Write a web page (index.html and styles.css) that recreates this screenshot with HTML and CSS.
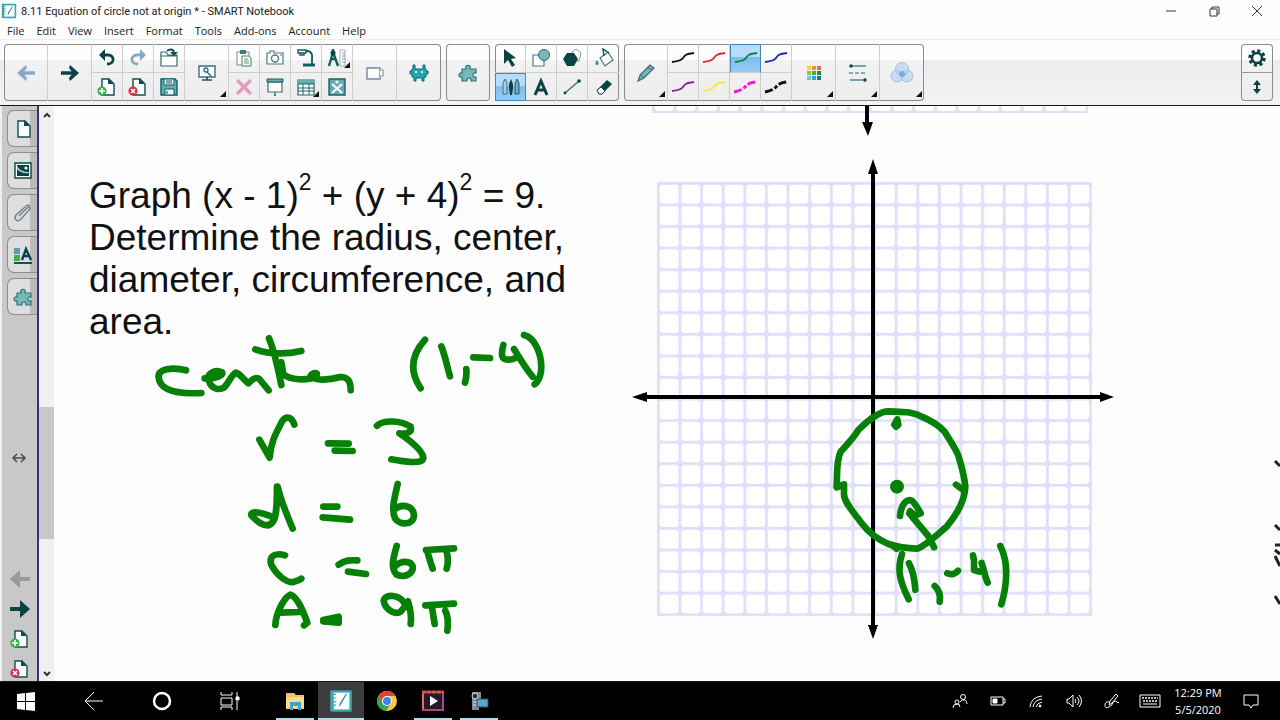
FILE: index.html
```html
<!DOCTYPE html>
<html lang="en">
<head>
<meta charset="utf-8">
<meta name="viewport" content="width=device-width, initial-scale=1">
<title>8.11 Equation of circle not at origin * - SMART Notebook</title>
<link rel="stylesheet" href="styles.css">
</head>
<body>
<svg class="defs" aria-hidden="true">
  <symbol id="page" viewBox="0 0 20 20"><path d="M5 2h7l5 5v11H5z" fill="#fff" stroke="#0d4f55" stroke-width="1.4"/><path d="M11 1l6 6h-6z" fill="#0d4f55"/></symbol>
  <symbol id="page-add" viewBox="0 0 20 20"><use href="#page"/><circle cx="5" cy="14" r="4.6" fill="#35b04c"/><path d="M5 11v6M2 14h6" stroke="#fff" stroke-width="1.6"/></symbol>
  <symbol id="page-del" viewBox="0 0 20 20"><use href="#page"/><circle cx="5" cy="14" r="4.6" fill="#cf3345"/><path d="M3 12l4 4M7 12l-4 4" stroke="#fff" stroke-width="1.6"/></symbol>
  <symbol id="puzzle" viewBox="0 0 20 20"><path d="M4 6h4c-2-5 6-5 4 0h6v4c-4-1-4 5 0 4v4h-5c1-4-5-4-4 0H4v-4c-4 1-4-5 0-4z" fill="#74b9b8" stroke="#2d7377" stroke-width="1.2"/></symbol>
  <symbol id="arrow" viewBox="0 0 20 20"><path d="M1 10h14" stroke="currentColor" stroke-width="3.5"/><path d="M10 2l9 8-9 8-1-3 4-5-4-5z" fill="currentColor"/></symbol>
  <symbol id="solid-arrow" viewBox="0 0 20 20"><path d="M0 8h10V1l10 9-10 9v-7H0z" fill="currentColor"/></symbol>
  <symbol id="curve" viewBox="0 0 26 20"><path d="M2 14C8 13 11 13 13 10S16 6 24 5" fill="none" stroke="currentColor" stroke-width="1.8"/></symbol>
  <symbol id="curve-dash" viewBox="0 0 26 20"><path d="M2 15C8 14 11 12 13 10S16 6 24 5" fill="none" stroke="currentColor" stroke-width="3" stroke-dasharray="8 2 4 2"/></symbol>
  <symbol id="logo" viewBox="0 0 20 20"><rect x="1" y="1" width="18" height="18" rx="1" fill="#3fa3b8"/><path d="M4 3h13v14H4z" fill="#fff"/><path d="M5 4v12" stroke="#4b9aaa" stroke-width="2" stroke-dasharray="1 2"/><path d="M15 4l-5 9-2 2 1-3 5-8z" fill="#2c8399"/></symbol>
</svg>
<div class="app">
  <header class="titlebar">
    <svg class="i16" aria-hidden="true"><use href="#logo"/></svg>
    <h1>8.11 Equation of circle not at origin * - SMART Notebook</h1>
    <div class="window-buttons">
      <button aria-label="Minimize"><svg class="i12" viewBox="0 0 12 12"><path d="M1 6h10"/></svg></button>
      <button aria-label="Restore"><svg class="i12" viewBox="0 0 12 12"><path d="M2 4h7v7H2zM4 4V2h7v7H9"/></svg></button>
      <button aria-label="Close"><svg class="i12" viewBox="0 0 12 12"><path d="M1 1l10 10M11 1L1 11"/></svg></button>
    </div>
  </header>
  <nav class="menubar" aria-label="Main menu">
    <button>File</button><button>Edit</button><button>View</button><button>Insert</button><button>Format</button><button>Tools</button><button>Add-ons</button><button>Account</button><button>Help</button>
  </nav>

  <div class="toolbar" role="toolbar" aria-label="Tools">
    <div class="group">
      <button class="big faded" aria-label="Previous page"><svg class="i20 flip"><use href="#arrow"/></svg></button>
      <button class="big" aria-label="Next page"><svg class="i20"><use href="#arrow"/></svg></button>
      <div class="pairs">
        <button aria-label="Undo"><svg class="i20" viewBox="0 0 20 20"><path d="M4 7h7c7 0 7 9-1 9" fill="none" stroke="#0a4246" stroke-width="2.8"/><path d="M8 1L2 7l6 6z" fill="#0a4246"/></svg></button>
        <button aria-label="Add page"><svg class="i20"><use href="#page-add"/></svg></button>
        <button aria-label="Redo"><svg class="i20" viewBox="0 0 20 20"><path d="M16 7H9c-7 0-7 9 1 9" fill="none" stroke="#88a9c3" stroke-width="2.8"/><path d="M12 1l6 6-6 6z" fill="#88a9c3"/></svg></button>
        <button aria-label="Delete page"><svg class="i20"><use href="#page-del"/></svg></button>
        <button aria-label="Open"><svg class="i20" viewBox="0 0 20 20"><path d="M2 18V4h5l2 3h9v11zM2 8h16" fill="#fff" stroke="#2c6f74" stroke-width="1.2"/><path d="M8 3c4-3 7-1 7 2" fill="none" stroke="#0d4f55" stroke-width="2"/><path d="M11 4h8l-4 4z" fill="#0d4f55"/></svg></button>
        <button aria-label="Save"><svg class="i20" viewBox="0 0 20 20"><path d="M2 2h14l2 2v14H2z" fill="#62adae" stroke="#145b62" stroke-width="1.4"/><path d="M5 2h10v6H5zM6 12h9v6H6z" fill="#e9f4f4" stroke="#145b62"/><path d="M7 4h6M7 6h6M8 14v3" stroke="#145b62"/></svg></button>
      </div>
      <button class="big more" aria-label="View screens"><svg class="i20" viewBox="0 0 20 20"><path d="M2 3h16v11H2z" fill="#fff" stroke="#426c80" stroke-width="1.4"/><path d="M5 17h10M10 14v3" stroke="#145b62" stroke-width="1.6"/><circle cx="9" cy="7" r="2" fill="none" stroke="#28719b" stroke-width="1.4"/><path d="M10 9l4 4" stroke="#28719b" stroke-width="1.6"/></svg></button>
      <div class="pairs">
        <button aria-label="Paste"><svg class="i20" viewBox="0 0 20 20"><path d="M3 4h12v13H3z" fill="#fff" stroke="#668e9e"/><path d="M6 2h6v4H6z" fill="#397d83"/><path d="M8 8h7l2 2v8H8z" fill="#fff" stroke="#49815a"/><path d="M10 11h4M10 13h5M10 15h5" stroke="#5d9e63"/></svg></button>
        <button aria-label="Delete"><svg class="i20" viewBox="0 0 20 20"><path d="M3 3l14 14M17 3L3 17" stroke="#dda0bd" stroke-width="3.4"/></svg></button>
        <button aria-label="Capture"><svg class="i20" viewBox="0 0 20 20"><path d="M2 5h3V3h4v2h9v11H2z" fill="#fff" stroke="#4f7b83" stroke-width="1.2"/><circle cx="10" cy="10.5" r="3.5" fill="none" stroke="#4f7b83" stroke-width="1.4"/><path d="M15 7h2" stroke="#4f7b83"/></svg></button>
        <button aria-label="Screen shade"><svg class="i20" viewBox="0 0 20 20"><path d="M3 5h14v10H3z" fill="#fff" stroke="#426c76" stroke-width="1.2"/><path d="M2 2h16v3H2z" fill="#6aacb0" stroke="#145b62"/><path d="M10 15v2" stroke="#145b62"/><circle cx="10" cy="18" r="1" fill="#145b62"/></svg></button>
        <button aria-label="Document camera"><svg class="i20" viewBox="0 0 20 20"><path d="M9 3h3q5 1 4 8v6" fill="none" stroke="#145b62" stroke-width="1.8"/><path d="M2 2h8v3H2zM4 5h4v2H4z" fill="#fff" stroke="#145b62" stroke-width="1.4"/><path d="M7 17h12" stroke="#145b62" stroke-width="3"/></svg></button>
        <button aria-label="Table" class="more"><svg class="i20" viewBox="0 0 20 20"><path d="M2 3h16v15H2z" fill="#fff" stroke="#23666c" stroke-width="1.2"/><path d="M2 3h16v4H2z" fill="#67abae"/><path d="M2 7h16M2 11h16M2 14h16M7 7v11M13 7v11" stroke="#23666c"/></svg></button>
        <button aria-label="Measurement tools" class="more"><svg class="i20" viewBox="0 0 20 20"><path d="M6 1v3M6 4L2 18M6 4l5 14M4 11h5" fill="none" stroke="#145b62" stroke-width="2.4"/><circle cx="6" cy="5" r="2.5" fill="#0a4246"/><path d="M13 2h5v16h-5z" fill="#fff" stroke="#a0aeb5"/><path d="M15 5h3M15 8h3M15 11h3M15 14h3" stroke="#83959f"/></svg></button>
        <button aria-label="Activity builder"><svg class="i20" viewBox="0 0 20 20"><path d="M2 2h16v16H2z" fill="#66aab0" stroke="#1b6269" stroke-width="1.4"/><path d="M5 7l10 9M15 7L5 16" stroke="#fff" stroke-width="2.2"/><circle cx="10" cy="5" r="1.6" fill="#fff"/></svg></button>
      </div>
      <button class="big" aria-label="Response"><svg class="i20" viewBox="0 0 20 20"><path d="M2 5h13v11H2z" fill="#fff" stroke="#7187ad" stroke-width="1.4"/><path d="M15 7h3v6h-3" fill="#fff" stroke="#7c9d98" stroke-width="1.2"/></svg></button>
      <button class="big" aria-label="Lab activities"><svg class="i20" viewBox="0 0 20 20"><path d="M4 2h2v4h8V2h2v4h1v2h2v3h-2v3h-2v4h-2v-3H7v3H5v-4H3v-3H1V8h2V6h1z" fill="#22a7b3" stroke="#116575"/><path d="M6 8h2v2H6zM12 8h2v2h-2z" fill="#dff"/></svg></button>
    </div>
    <div class="group">
      <button class="big" aria-label="Add-ons"><svg class="i20"><use href="#puzzle"/></svg></button>
    </div>
    <div class="group">
      <div class="pairs">
        <button aria-label="Select"><svg class="i20" viewBox="0 0 20 20"><path d="M4 1l12 9-5 1 4 6-3 2-4-7-4 4z" fill="#0a4246"/></svg></button>
        <button aria-label="Pens" class="on" aria-pressed="true"><svg class="i20" viewBox="0 0 20 20"><path d="M2 6l2-4 2 4v11H2z" fill="#a5d0dc" stroke="#317486"/><path d="M8 7l2-5 2 5v4l-1 7H9l-1-7z" fill="#0a4246"/><path d="M14 6l2-4 2 4v11h-4z" fill="#6eacbc" stroke="#235f70"/></svg></button>
        <button aria-label="Shapes"><svg class="i20" viewBox="0 0 20 20"><path d="M2 7h11v11H2z" fill="#fff" stroke="#477e8a" stroke-width="1.2"/><circle cx="13" cy="7" r="5.5" fill="#79b7ba" stroke="#286d74"/></svg></button>
        <button aria-label="Text"><svg class="i20" viewBox="0 0 20 20"><path d="M4 18L10 4l6 14M6 13h8" fill="none" stroke="#0a4246" stroke-width="3"/></svg></button>
        <button aria-label="Regular polygons"><svg class="i20" viewBox="0 0 20 20"><path d="M10 4l4-3 5 4-2 8h-5z" fill="#fff" stroke="#82999d"/><path d="M5 5h7l4 6-4 7H5l-4-7z" fill="#0a4246"/></svg></button>
        <button aria-label="Line"><svg class="i20" viewBox="0 0 20 20"><path d="M3 16L17 4" stroke="#346d73" stroke-width="1.2"/><circle cx="3" cy="16" r="1.4" fill="#0a4246"/><circle cx="17" cy="4" r="1.8" fill="#0a4246"/></svg></button>
        <button aria-label="Fill"><svg class="i20" viewBox="0 0 20 20"><path d="M6 10l8-6 5 8-8 6z" fill="#fff" stroke="#3e747b" stroke-width="1.2"/><path d="M10 8L9 1l6 4" fill="none" stroke="#0d4f55" stroke-width="1.4"/><path d="M3 12c3 4 1 5 0 5s-3-1 0-5" fill="#3d8ba2"/></svg></button>
        <button aria-label="Eraser"><svg class="i20" viewBox="0 0 20 20"><path d="M3 13L13 3l5 4L8 17H5z" fill="#0a4246"/><path d="M3 13l4-3 4 4-3 3H5z" fill="#fff" stroke="#0a4246"/></svg></button>
      </div>
    </div>
    <div class="group">
      <button class="big more" aria-label="Pen type"><svg class="i20" viewBox="0 0 20 20"><path d="M4 12L14 2l4 3L8 15l-6 3z" fill="#79b3ba" stroke="#366c78" stroke-width="1.2"/><path d="M12 4l4 3M4 12l4 3" stroke="#366c78"/></svg></button>
      <div class="pairs">
        <button aria-label="Black pen" class="c-black"><svg class="pen"><use href="#curve"/></svg></button>
        <button aria-label="Purple pen" class="c-purple"><svg class="pen"><use href="#curve"/></svg></button>
        <button aria-label="Red pen" class="c-red"><svg class="pen"><use href="#curve"/></svg></button>
        <button aria-label="Yellow pen" class="c-yellow"><svg class="pen"><use href="#curve"/></svg></button>
        <button aria-label="Green pen" class="c-green on" aria-pressed="true"><svg class="pen"><use href="#curve"/></svg></button>
        <button aria-label="Magenta dashed pen" class="c-magenta"><svg class="pen"><use href="#curve-dash"/></svg></button>
        <button aria-label="Blue pen" class="c-blue"><svg class="pen"><use href="#curve"/></svg></button>
        <button aria-label="Black dashed pen" class="c-black"><svg class="pen"><use href="#curve-dash"/></svg></button>
      </div>
      <button class="big more" aria-label="Color"><svg class="i20" viewBox="0 0 20 20"><path d="M3 3h4v4H3z" fill="#f3d433"/><path d="M8 3h4v4H8z" fill="#ee8c3a"/><path d="M13 3h4v4h-4z" fill="#e66b55"/><path d="M3 8h4v4H3z" fill="#9aba42"/><path d="M8 8h4v4H8z" fill="#52a83a"/><path d="M13 8h4v4h-4z" fill="#169537"/><path d="M3 13h4v4H3z" fill="#72c6d9"/><path d="M8 13h4v4H8z" fill="#3aa0c8"/><path d="M13 13h4v4h-4z" fill="#1472a0"/></svg></button>
      <button class="big more" aria-label="Line style"><svg class="i20" viewBox="0 0 20 20"><path d="M2 3h16M2 17h16" stroke="#5a8799" stroke-width="1.5"/><path d="M1 10h18" stroke="#6a8cab" stroke-width="1.4" stroke-dasharray="4 2"/><circle cx="3" cy="3" r="1.7" fill="#0a4246"/><circle cx="17" cy="17" r="1.7" fill="#0a4246"/></svg></button>
      <button class="big more" aria-label="Transparency"><svg class="i24" viewBox="0 0 24 24"><g fill="#b9d2f2" fill-opacity=".7" stroke="#a3bfe3"><circle cx="7" cy="15" r="6"/><circle cx="17" cy="15" r="6"/><circle cx="12" cy="8" r="6.5"/></g><circle cx="12" cy="13" r="3" fill="#7fa9da"/></svg></button>
    </div>
    <div class="group settings">
      <button aria-label="Customize toolbar"><svg class="i20" viewBox="0 0 20 20"><circle cx="10" cy="10" r="7" fill="none" stroke="#0a4246" stroke-width="3.5" stroke-dasharray="3 2.5"/><circle cx="10" cy="10" r="5" fill="none" stroke="#0a4246" stroke-width="2.6"/></svg></button>
      <button aria-label="Move toolbar"><svg class="i20" viewBox="0 0 20 20"><path d="M10 5v10" stroke="#0a4246" stroke-width="2"/><path d="M6 8l4-5 4 5zM6 12l4 5 4-5z" fill="#0a4246"/></svg></button>
    </div>
  </div>

  <main class="workspace">
    <aside class="sidebar">
      <div class="tabs">
        <button aria-label="Page sorter"><svg class="i20"><use href="#page"/></svg></button>
        <button aria-label="Gallery"><svg class="i20" viewBox="0 0 20 20"><path d="M2 2h16v15H2z" fill="#fff" stroke="#0a4246" stroke-width="1.4"/><path d="M4 4h12v11H4z" fill="#0a4246"/><path d="M4 5q3 6 12 6v1Q8 13 4 8z" fill="#b6d5d8"/><circle cx="13" cy="7" r="1.6" fill="#fff"/></svg></button>
        <button aria-label="Attachments"><svg class="i20" viewBox="0 0 20 20"><path d="M6 13l8-8q3-2 3 1L8 16q-3 3-5 1t0-5L12 4q3-3 5-1" fill="none" stroke="#72858f" stroke-width="1.5"/></svg></button>
        <button aria-label="Properties"><svg class="i20" viewBox="0 0 20 20"><path d="M1 3h6v6H1z" fill="#6297b5"/><path d="M1 10h6v6H1z" fill="#45b04b"/><path d="M9 15l4-11 5 11M11 11h5" fill="none" stroke="#0a4246" stroke-width="2.4"/><path d="M1 18h18" stroke="#0a4246" stroke-width="1.8"/></svg></button>
        <button aria-label="Add-ons"><svg class="i20"><use href="#puzzle"/></svg></button>
      </div>
      <button class="handle" aria-label="Resize sidebar"><svg class="i16" viewBox="0 0 16 16"><path d="M3 8h10M6 4L2 8l4 4M10 4l4 4-4 4" fill="none" stroke="#4b4b4b" stroke-width="1.6"/></svg></button>
      <div class="pager">
        <button class="disabled" aria-label="Previous page"><svg class="i20 flip"><use href="#solid-arrow"/></svg></button>
        <button aria-label="Next page"><svg class="i20"><use href="#solid-arrow"/></svg></button>
        <button aria-label="Add page"><svg class="i20"><use href="#page-add"/></svg></button>
        <button aria-label="Delete page"><svg class="i20"><use href="#page-del"/></svg></button>
      </div>
    </aside>
    <div class="scrollbar">
      <button aria-label="Scroll up"><svg class="i12" viewBox="0 0 12 12"><path d="M3 8l3-3 3 3"/></svg></button>
      <div class="track"><div class="thumb"></div></div>
      <button aria-label="Scroll down"><svg class="i12" viewBox="0 0 12 12"><path d="M3 5l3 3 3-3"/></svg></button>
    </div>
    <section class="canvas">
      <p class="question">Graph (x - 1)<sup>2</sup> + (y + 4)<sup>2</sup> = 9.<br>Determine the radius, center,<br>diameter, circumference, and<br>area.</p>
      <svg class="drawing" viewBox="54 106 1226 575" preserveAspectRatio="xMinYMin meet" role="img" aria-label="Coordinate grid with a circle centered at (1,-4); notes: center (1,-4), r = 3, d = 6, C = 6π, A = 9π">
        <defs>
          <pattern id="cells" width="20" height="20" patternUnits="userSpaceOnUse"><rect width="20" height="20" fill="#dfdffb"/><rect x="2.5" y="2.5" width="17.5" height="17.5" rx="3" fill="#fff"/></pattern>
        </defs>
        <svg x="657" y="182" width="435" height="434" viewBox="0 0 402.5 402.5" preserveAspectRatio="none"><rect width="403" height="403" fill="url(#cells)"/></svg>
        <svg x="652" y="106" width="436" height="7" viewBox="0 395 402 7" preserveAspectRatio="none"><rect width="402" height="402" fill="url(#cells)"/></svg>
        <path d="M867 106v20M873 168v462M642 397h463" stroke="#000" stroke-width="4"/>
        <path d="M862 122h11l-5 14zM868 174h10l-5-15zM868 625h10l-5 14zM647 392v10l-15-5zM1100 392v10l14-5z"/>
        <g class="ink" transform="translate(140 325) scale(.33333)">
          <path d="M138 136C100 126 52 130 56 158C60 195 110 208 184 204"/>
          <path d="M194 160C225 162 252 152 246 142C225 132 198 145 207 168C215 195 240 195 252 188C268 170 275 150 287 143C300 145 312 165 325 175C340 160 350 155 358 162L386 196"/>
          <path d="M387 40C400 70 410 110 424 180M346 73C380 85 430 90 484 78M424 112L430 148C450 165 500 168 525 156C540 143 522 140 512 152C520 166 560 168 600 156C625 155 632 170 632 196"/>
          <path d="M855 44C818 85 805 135 842 190M904 64C915 90 920 120 930 154M979 132C980 145 979 160 975 173M1000 97L1050 99M1090 60C1082 90 1085 104 1104 104C1125 104 1130 98 1132 90M1122 72C1145 110 1160 135 1178 155M1152 30C1185 38 1208 90 1203 140Q1198 168 1184 178"/>
          <path d="M358 344L389 398C392 350 410 320 427 288C438 272 455 275 463 299M564 355L626 356M584 377L638 378M711 302C730 285 780 285 812 305C818 325 795 327 778 325C800 340 850 375 850 400C848 418 790 410 754 403"/>
        </g>
        <g class="ink" transform="translate(230 470) scale(.33333)">
          <path d="M141 50C140 90 142 140 128 156C115 175 90 165 64 136C62 122 90 125 130 142M143 50C155 100 175 145 188 176M280 110H322M278 142L360 149"/>
          <path d="M503 42C492 90 484 120 495 145C510 168 552 165 552 135C548 105 515 100 494 118"/>
          <path d="M165 256C140 248 115 255 124 285C140 315 170 340 190 336C200 333 210 330 214 326M326 284C345 270 360 270 382 271M354 305L408 312"/>
          <path d="M500 228C488 270 482 295 500 314C525 325 552 310 548 288C540 270 510 272 494 290M588 240L672 235M592 244C598 265 602 280 608 296M650 245C655 265 655 280 650 296"/>
          <path d="M136 465C138 430 160 385 181 374C205 380 225 440 232 458L222 466M150 428L212 426M280 450L326 440V458L280 454"/>
          <path d="M526 404C510 372 465 370 461 393C468 425 500 434 512 425C525 410 530 400 534 394C542 420 545 440 542 462M586 406L672 401M606 412L614 462M646 422C655 440 655 460 652 482"/>
        </g>
        <g class="ink" transform="translate(820 390) scale(.33333)">
          <path d="M50 290C52 250 48 215 62 185C80 165 100 145 115 120C145 90 180 64 205 64C240 66 275 62 310 82C340 95 360 110 374 125C395 160 410 180 416 200C428 240 434 265 436 290C434 340 405 380 380 410C350 435 320 465 292 476C260 475 230 470 205 462C165 445 140 420 125 400C100 365 70 335 72 310V283L50 292"/>
          <path d="M232 88L223 104L228 110L235 104ZM408 284L430 300M218 466L230 476M268 370L325 438L342 472M240 378C242 350 258 320 278 334Q292 350 302 370L285 376L270 364"/>
          <circle cx="231" cy="290" r="13"/>
          <path d="M246 492C230 540 240 575 266 628M267 520C280 545 284 570 286 599M344 588Q364 606 359 635M382 550C395 556 408 550 414 542M459 496C465 515 462 530 462 540L478 545M485 519C492 540 495 560 503 578M541 468C568 520 560 590 544 643"/>
        </g>
        <path d="M1275 461l5 5M1275 525l5 5M1275 545h5M1275 550l5 4M1275 556l5 10M1275 596l5 8" fill="none" stroke="#222" stroke-width="3"/>
      </svg>
    </section>
  </main>

  <footer class="taskbar">
    <button class="start" aria-label="Start"><svg class="i20" viewBox="0 0 20 20"><path d="M1 3l8-1v8H1zM10 2l9-1v9h-9zM1 11h8v8l-8-1zM10 11h9v9l-9-1z" fill="#fff"/></svg></button>
    <div class="system">
      <button aria-label="Back"><svg class="i20 line" viewBox="0 0 20 20"><path d="M19 10H1M10 1l-9 9 9 9"/></svg></button>
      <button aria-label="Cortana"><svg class="i20 line" viewBox="0 0 20 20"><circle cx="10" cy="10" r="8" stroke-width="2.5"/></svg></button>
      <button aria-label="Task view"><svg class="i20 line" viewBox="0 0 20 20"><path d="M1 1v3h11V1M1 7h11v7H1zM1 19v-3h11v3M17 1v5M17 10v9"/><path d="M16 6h3v3h-3z" fill="#fff"/></svg></button>
    </div>
    <div class="apps">
      <button class="open" aria-label="File Explorer"><svg class="i20" viewBox="0 0 20 20"><path d="M1 2h8l2 2h8v14H1z" fill="#efc262"/><path d="M1 6h18v11H1z" fill="#fbdc84"/><path d="M5 11h11v8h-3v-4H8v4H5z" fill="#3ea4d6"/></svg></button>
      <button class="open active" aria-label="SMART Notebook"><svg class="i24"><use href="#logo"/></svg></button>
      <button aria-label="Chrome"><svg class="i20" viewBox="0 0 20 20"><circle cx="10" cy="10" r="10" fill="#f7cc36"/><path d="M1.3 5A10 10 0 0 1 18.700 5H10a5 5 0 0 0-4 8z" fill="#df4535"/><path d="M1.3 5A10 10 0 0 0 9 20l5-7.500a5 5 0 0 1-8 0z" fill="#34a653"/><circle cx="10" cy="10" r="5" fill="#fff"/><circle cx="10" cy="10" r="4" fill="#4181ed"/></svg></button>
      <button class="open" aria-label="Movies"><svg class="i24" viewBox="0 0 24 24"><path d="M2 3h20v18H2z" fill="#211c28" stroke="#a44c87" stroke-width="2"/><path d="M1 3h22" stroke="#e64d45" stroke-width="3" stroke-dasharray="4 1"/><path d="M2 5v15" stroke="#ef7856" stroke-width="1.5"/><path d="M9 7l8 5-8 5z" fill="#fff"/></svg></button>
      <button class="open" aria-label="Camcorder"><svg class="i20" viewBox="0 0 20 20"><path d="M3 1h9v6l-2 5v7H3z" fill="#858b8d"/><circle cx="6" cy="5" r="3" fill="#333" stroke="#ddd"/><path d="M4 11h4M4 14h4" stroke="#ddd"/><path d="M8 8h11v8H8z" fill="#55a9d0" stroke="#394d56"/></svg></button>
    </div>
    <div class="tray">
      <button aria-label="People"><svg class="i16 line" viewBox="0 0 16 16"><circle cx="5" cy="9" r="2"/><circle cx="11" cy="4" r="2.5"/><path d="M1 15q0-4 4-4 3 0 3 3M8 9q2-3 5-2 2 1 2 4"/></svg></button>
      <button aria-label="Battery"><svg class="i16 line" viewBox="0 0 16 16"><path d="M1 4h12v8H1zM13 6h2v4h-2"/><path d="M3 6h4v4H3z" fill="#fff"/></svg></button>
      <button aria-label="Network"><svg class="i16 line" viewBox="0 0 16 16"><path d="M2 14Q3 4 14 3M5 14q1-7 9-8M8 14q1-4 6-5"/><circle cx="12" cy="13" r="1" fill="#fff"/></svg></button>
      <button aria-label="Volume"><svg class="i16 line" viewBox="0 0 16 16"><path d="M1 6h2l4-4v12l-4-4H1zM9 6q2 2 0 4M11 4q4 4 0 8M13 2q5 6 0 12"/></svg></button>
      <button aria-label="Pen workspace"><svg class="i16 line" viewBox="0 0 16 16"><path d="M5 12l1-4 6-7 2 2-6 7zM6 9q-5-1-5 3t4 2 4-5q3-2 4 0t2 0"/></svg></button>
      <button aria-label="Keyboard"><svg class="keyboard line" viewBox="0 0 22 14"><path d="M1 1h20v12H1zM4 10h14"/><path d="M3 4h16M4 7h15" stroke-width="1.5" stroke-dasharray="2 1"/></svg></button>
    </div>
    <div class="clock"><time datetime="12:29">12:29 PM</time><time datetime="2020-05-05">5/5/2020</time></div>
    <button class="notify" aria-label="Notifications"><svg class="i16 line" viewBox="0 0 16 16"><path d="M1 2h14v10h-5l-2 3-2-3H1z"/></svg></button>
  </footer>
</div>
</body>
</html>
```
FILE: styles.css
```css
* { box-sizing: border-box; }
body {
  margin: 0;
  background: #fdfdfd;
  color: #222;
  font-family: "Open Sans", "Noto Sans", sans-serif;
  font-size: 11px;
}
button {
  display: flex;
  align-items: center;
  justify-content: center;
  margin: 0;
  padding: 0;
  border: 0;
  background: none;
  color: inherit;
  font: inherit;
}
svg { flex: none; }
.defs { position: absolute; width: 0; height: 0; }
.i12 { width: 12px; height: 12px; fill: none; stroke: #333; }
.i16 { width: 16px; height: 16px; }
.i20 { width: 20px; height: 20px; }
.i24 { width: 24px; height: 24px; }
.flip { transform: rotate(180deg); }
.line { fill: none; stroke: #fff; }

.app { display: flex; flex-direction: column; min-height: 100vh; overflow: hidden; }

.titlebar { display: flex; align-items: center; gap: 4px; height: 22px; padding: 0 2px 0 1px; }
.titlebar h1 {
  flex: 1;
  margin: 0;
  font-family: Roboto, "Open Sans", sans-serif;
  font-size: 11px;
  font-weight: 400;
}
.window-buttons { display: flex; }
.window-buttons button { width: 43px; height: 22px; }

.menubar { display: flex; gap: 12px; height: 18px; padding-left: 7px; border-bottom: 1px solid #ececec; }

.toolbar {
  display: flex;
  gap: 5px;
  padding: 4px 7px 4px 4px;
  background: linear-gradient(#fdfdfd 20px, #ececee 20px, #f3f3f6);
}
.group {
  display: flex;
  height: 57px;
  border-radius: 4px;
  background: linear-gradient(#fdfdfd 16px, #f2f2f2 16px, #ededed);
  box-shadow: inset 0 0 0 1px #8b8b8b;
  color: #0a4246;
}
.group button { position: relative; border-right: 1px solid #cdcdcd; }
.group > :last-child, .group > .pairs:last-child button:nth-last-child(-n+2) { border-right: 0; }
.big { width: 44px; }
.group .faded { color: #88a9c3; }
.pairs {
  display: grid;
  grid-template-rows: 1fr 1fr;
  grid-auto-columns: 31px;
  grid-auto-flow: column;
}
.pairs button:nth-child(odd) { border-bottom: 1px solid #cdcdcd; }
.more::after {
  content: "";
  position: absolute;
  right: 2px;
  bottom: 4px;
  border: 3px solid #111;
  border-top-color: transparent;
  border-left-color: transparent;
}
.group .on { border: 1px solid #4787b8; background: linear-gradient(#b7dcfa 45%, #7dbdf0 45%, #94cbf5); }
.pen { width: 26px; height: 20px; }
.c-black { color: #111; }
.c-purple { color: #86208e; }
.c-red { color: #dc2631; }
.c-yellow { color: #f2ed24; }
.c-green { color: #108235; }
.c-magenta { color: #ee19dc; }
.c-blue { color: #1f22bd; }
.settings { flex-direction: column; width: 32px; margin-left: auto; }
.settings button { flex: 1; border-right: 0; }
.settings button:first-child { border-bottom: 1px solid #999; }

.workspace { display: flex; flex: 1; border-top: 1px solid #160b58; border-bottom: 1px solid #160b58; }
.sidebar {
  display: flex;
  flex-direction: column;
  justify-content: space-between;
  width: 39px;
  padding: 4px 0 0 5px;
  border-left: 2px solid #eee;
  border-right: 2px solid #3b2d80;
  background: #c8c8c8;
  color: #0a4246;
}
.tabs { display: flex; flex-direction: column; gap: 5px; }
.tabs button {
  height: 37px;
  border: 1px solid #8d8d8d;
  border-right: 0;
  border-radius: 7px 0 0 7px;
  background: linear-gradient(90deg, #dedede 75%, #bcbcbc 75%);
}
.handle { padding: 34px 6px 0 0; }
.pager { display: flex; flex-direction: column; gap: 6px; padding-right: 5px; }
.pager button { height: 24px; }
.pager .disabled { color: #999; }

.scrollbar { display: flex; flex-direction: column; width: 15px; background: #f0f0f0; }
.scrollbar button { height: 17px; }
.scrollbar svg { stroke-width: 2; }
.track { display: grid; flex: 1; grid-template-rows: 285fr 132fr 125fr; }
.thumb { grid-row: 2; background: #c9c9c9; }

.canvas { position: relative; flex: 1; padding: 69px 35px; background: #fdfdfd; }
.question {
  margin: 0;
  color: #111;
  font-family: "Liberation Sans", Arial, sans-serif;
  font-size: 37px;
  line-height: 42px;
}
.question sup { font-size: 23px; line-height: 0; vertical-align: 18px; }
.drawing { position: absolute; inset: 0; width: 100%; height: 100%; }
.ink { fill: none; stroke: #078007; stroke-width: 20; stroke-linecap: round; stroke-linejoin: round; }
.ink circle { fill: #078007; stroke-width: 16; }

.taskbar { display: flex; height: 38px; background: #000; color: #fff; }
.start { width: 52px; }
.system { display: flex; margin: 0 8px; }
.system button { width: 68px; }
.apps { display: flex; flex: 1; }
.apps button { width: 46px; }
.open { background: linear-gradient(#a9dfee, #a9dfee) bottom / 38px 2px no-repeat; }
.apps .active { background: linear-gradient(#a9dfee, #a9dfee) bottom / 100% 2px no-repeat #3c3c3c; }
.tray { display: flex; }
.tray button { width: 38px; }
.keyboard { width: 22px; height: 14px; }
.clock {
  display: flex;
  flex-direction: column;
  align-items: center;
  justify-content: center;
  width: 58px;
  line-height: 17px;
}
.notify { width: 48px; margin-right: 5px; }
```
